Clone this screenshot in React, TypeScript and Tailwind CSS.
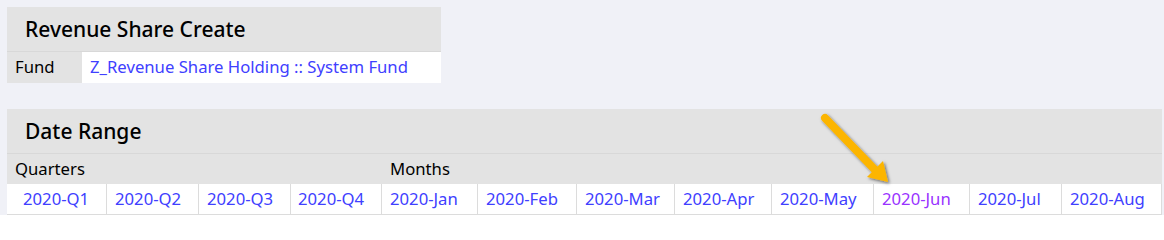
import React from "react";

const quarters = [
  { t: "2020-Q1", w: 100, pl: "pl-4" },
  { t: "2020-Q2", w: 92, pl: "pl-2" },
  { t: "2020-Q3", w: 92, pl: "pl-2" },
  { t: "2020-Q4", w: 91, pl: "pl-[7px]" },
];
const months = [
  { t: "2020-Jan", w: 96 },
  { t: "2020-Feb", w: 99 },
  { t: "2020-Mar", w: 98 },
  { t: "2020-Apr", w: 97 },
  { t: "2020-May", w: 102 },
  { t: "2020-Jun", w: 96, visited: true },
  { t: "2020-Jul", w: 92 },
  { t: "2020-Aug", w: 100 },
];

export default function App() {
  return (
    <div
      className="relative w-full h-[215px] overflow-hidden bg-[#f0f1f7] pt-[7px] pl-[7px] text-[16.7px] leading-none text-black"
      style={{ fontFamily: '"Noto Sans", "Open Sans", sans-serif' }}
    >
      {/* Panel 1 */}
      <div className="w-[434px] flex flex-col">
        <div className="h-[45px] bg-[#e3e3e3] border-b border-[#d8d8d8] flex items-center pl-[18px] text-[21px] font-medium">
          Revenue Share Create
        </div>
        <div className="h-[31px] flex">
          <div className="w-[75px] bg-[#e3e3e3] flex items-center pl-2">Fund</div>
          <div className="flex-1 bg-white flex items-center pl-2 text-[#4040ff]">
            Z_Revenue Share Holding :: System Fund
          </div>
        </div>
      </div>

      {/* Panel 2 */}
      <div className="mt-[26px] w-[1155px] flex flex-col">
        <div className="h-[45px] bg-[#e3e3e3] border-b border-[#d8d8d8] flex items-center pl-[18px] text-[21px] font-medium">
          Date Range
        </div>
        <div className="h-[30px] bg-[#e3e3e3] flex items-center">
          <div className="w-[375px] pl-2">Quarters</div>
          <div className="pl-2">Months</div>
        </div>
        <div className="h-[31px] flex bg-white border-b border-[#dcdcdc]">
          {quarters.map((q) => (
            <div
              key={q.t}
              className={`${q.pl} flex items-center border-r border-[#dcdcdc] text-[#4040ff] shrink-0`}
              style={{ width: q.w }}
            >
              {q.t}
            </div>
          ))}
          {months.map((m) => (
            <div
              key={m.t}
              className={`pl-2 flex items-center border-r border-[#dcdcdc] shrink-0 ${m.visited ? "text-[#9933ff]" : "text-[#4040ff]"}`}
              style={{ width: m.w }}
            >
              {m.t}
            </div>
          ))}
        </div>
      </div>

      {/* Annotation arrow */}
      <svg
        className="absolute left-[810px] top-[105px] pointer-events-none"
        width="90"
        height="90"
        viewBox="0 0 90 90"
      >
        <defs>
          <filter id="sh" x="-30%" y="-30%" width="160%" height="160%">
            <feDropShadow dx="1.5" dy="1.5" stdDeviation="1.5" floodColor="#000" floodOpacity="0.55" />
          </filter>
        </defs>
        <g filter="url(#sh)">
          <line x1="15" y1="13" x2="70" y2="70" stroke="#fcb500" strokeWidth="8" strokeLinecap="round" />
          <polygon points="78,77 57,72 73,56" fill="#fcb500" />
        </g>
      </svg>
    </div>
  );
}
